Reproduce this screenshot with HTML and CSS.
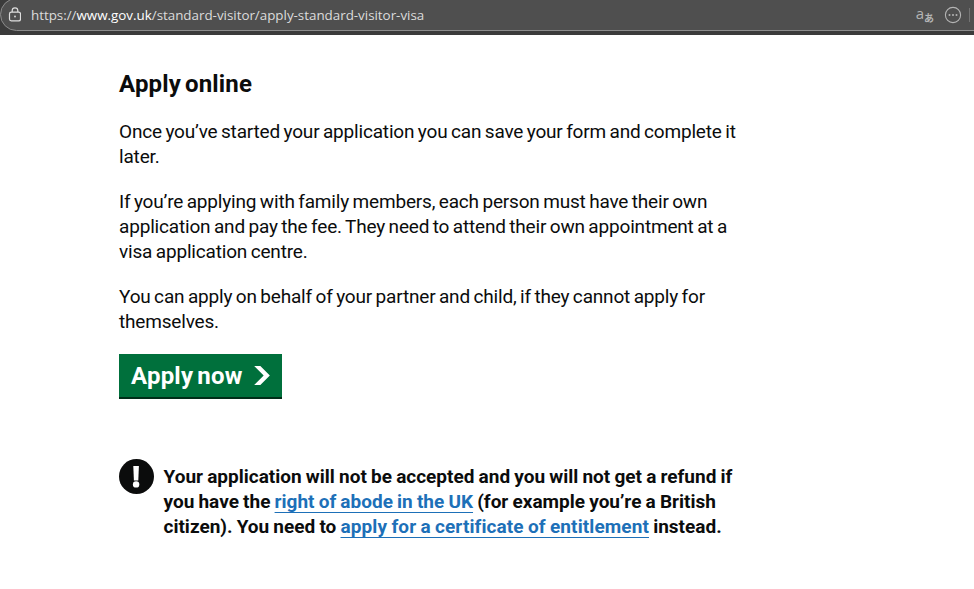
FILE: index.html
```html
<!DOCTYPE html>
<html lang="en">
<head>
  <meta charset="UTF-8">
  <meta name="viewport" content="width=device-width, initial-scale=1.0">
  <title>Apply for a Standard Visitor visa</title>
  <link rel="stylesheet" href="styles.css">
</head>
<body>
  <div class="browser-bar">
    <div class="address">
      <svg class="lock" width="14" height="16" viewBox="0 0 14 16" fill="none" stroke="#dedede" stroke-width="1.2">
        <rect x="2.5" y="5.1" width="11" height="8.8" rx="1.8"/>
        <path d="M5.2 5V3.6a2.8 2.8 0 0 1 5.6 0V5"/>
        <circle cx="8" cy="9.5" r="0.9" fill="#dedede" stroke="none"/>
      </svg>
      <span class="url">https://<span class="host">www.gov.uk</span>/standard-visitor/apply-standard-visitor-visa</span>
      <span class="translate">a<span class="kana">あ</span></span>
      <svg class="more" width="18" height="18" viewBox="0 0 18 18" fill="none" stroke="#b4b4b4" stroke-width="1.1">
        <circle cx="9" cy="9" r="7.6"/>
        <g fill="#b4b4b4" stroke="none">
          <circle cx="5.5" cy="9" r="1"/>
          <circle cx="9" cy="9" r="1"/>
          <circle cx="12.5" cy="9" r="1"/>
        </g>
      </svg>
      <span class="divider"></span>
    </div>
  </div>

  <main class="content">
    <h2>Apply online</h2>
    <p>Once you’ve started your application you can save your form and complete it<br>later.</p>
    <p class="middle">If you’re applying with family members, each person must have their own<br>application and pay the fee. They need to attend their own appointment at a<br>visa application centre.</p>
    <p>You can apply on behalf of your partner and child, if they cannot apply for<br>themselves.</p>
    <a class="button" href="#">
      <span class="button-label">Apply now</span>
      <svg class="arrow" width="16" height="19" viewBox="0 0 33 40">
        <path fill="#fff" d="M0 0h13l20 20-20 20H0l20-20z"/>
      </svg>
    </a>
    <div class="warning">
      <svg class="warning-icon" width="35" height="35" viewBox="0 0 35 35">
        <circle cx="17.5" cy="17.5" r="17.5" fill="#0b0c0c"/>
        <path fill="#fff" d="M14.3 7h5.6l-.6 14.4h-4.4z"/>
        <circle cx="17.1" cy="25.4" r="3.2" fill="#fff"/>
      </svg>
      <strong class="warning-text">Your application will not be accepted and you will not get a refund if<br>you have the <a href="#">right of abode in the UK</a> (for example you’re a British<br>citizen). You need to <a class="wide" href="#">apply for a certificate of entitlement</a> instead.</strong>
    </div>
  </main>
</body>
</html>
```
FILE: styles.css
```css
body {
  margin: 0;
  background: #fff;
  color: #0b0c0c;
  font-family: Roboto, "Liberation Sans", sans-serif;
  font-size: 19px;
  line-height: 25px;
  overflow: hidden;
}

.browser-bar {
  height: 35px;
  background: #3b3b3b;
  overflow: hidden;
}

.address {
  display: flex;
  align-items: center;
  box-sizing: border-box;
  height: 33px;
  margin-top: -2px;
  margin-right: -20px;
  padding: 1px 19px 0 6px;
  border: 1px solid #8c8c8c;
  border-radius: 17px 0 0 17px;
  background: #4f4f4f;
}

.url {
  padding-top: 1px;
  margin-left: 10px;
  color: #dcdcdc;
  font-family: "Open Sans", "Noto Sans", sans-serif;
  font-size: 13.4px;
  letter-spacing: -0.02px;
  white-space: nowrap;
}

.host {
  color: #fff;
}

.translate {
  margin-left: auto;
  padding-bottom: 3px;
  color: #b4b4b4;
  font-family: "Open Sans", "Noto Sans CJK JP", sans-serif;
  font-size: 15px;
  line-height: 16px;
}

.kana {
  position: relative;
  top: 3px;
  font-family: "Noto Sans CJK JP", sans-serif;
  font-size: 10px;
  font-weight: bold;
}

.more {
  margin-left: 10px;
}

.divider {
  width: 1px;
  height: 14px;
  margin: 0 4px 0 7px;
  background: #737373;
}

.content {
  padding: 34px 0 0 119px;
  white-space: nowrap;
}

h2 {
  margin: 0 0 20px;
  font-size: 24px;
  line-height: 30px;
  letter-spacing: 0.15px;
  word-spacing: -2px;
}

p {
  margin: 0 0 20px;
  letter-spacing: -0.18px;
  word-spacing: -1px;
}

.button {
  display: flex;
  align-items: center;
  box-sizing: border-box;
  width: 163px;
  height: 45px;
  padding: 0 12px 0 12px;
  border-bottom: 2px solid #002d18;
  background: #00703c;
  color: #fff;
  font-size: 24px;
  font-weight: bold;
  letter-spacing: 0.2px;
  word-spacing: -2px;
  text-decoration: none;
}

.button-label {
  padding-top: 1px;
}

.arrow {
  margin-left: auto;
}

.warning {
  display: flex;
  align-items: flex-start;
  gap: 9.5px;
  margin-top: 60px;
}

.warning-text {
  padding-top: 5px;
  word-spacing: -0.55px;
}

.warning-text a {
  color: #1d70b8;
  text-decoration: underline;
  text-decoration-thickness: 1px;
  text-decoration-skip-ink: none;
  text-underline-offset: 4px;
}

.warning-text .wide {
  letter-spacing: 0.1px;
}
```
